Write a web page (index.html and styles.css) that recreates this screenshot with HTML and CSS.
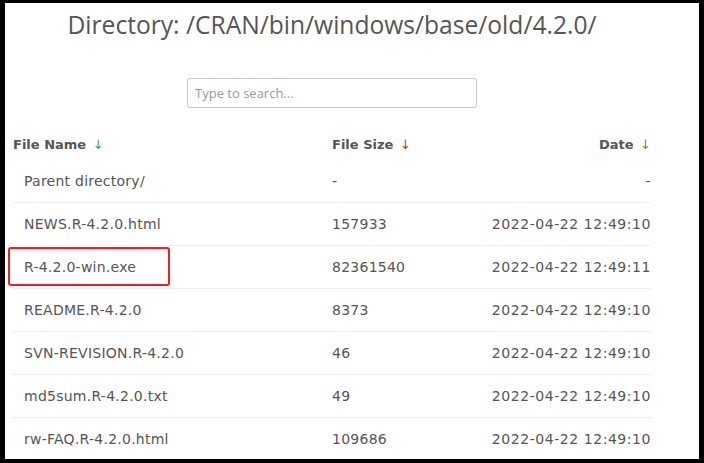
FILE: index.html
```html
<!DOCTYPE html>
<html>
<head>
<meta charset="utf-8">
<link rel="stylesheet" href="styles.css">
</head>
<body>
<div class="frame">
  <div class="content">
    <h1 class="title">Directory: /CRAN/bin/windows/base/old/4.2.0/</h1>
    <div class="search-wrap">
      <input class="search" type="text" placeholder="Type to search...">
    </div>
    <table class="listing">
      <thead>
        <tr>
          <th class="c-name">File Name <span class="arr arr-g">↓</span></th>
          <th class="c-size">File Size <span class="arr arr-r">↓</span></th>
          <th class="c-date">Date <span class="arr arr-o">↓</span></th>
        </tr>
      </thead>
      <tbody>
        <tr><td class="c-name">Parent directory/</td><td class="c-size">-</td><td class="c-date">-</td></tr>
        <tr><td class="c-name">NEWS.R-4.2.0.html</td><td class="c-size">157933</td><td class="c-date">2022-04-22 12:49:10</td></tr>
        <tr><td class="c-name"><span class="hl">R-4.2.0-win.exe</span></td><td class="c-size">82361540</td><td class="c-date">2022-04-22 12:49:11</td></tr>
        <tr><td class="c-name">README.R-4.2.0</td><td class="c-size">8373</td><td class="c-date">2022-04-22 12:49:10</td></tr>
        <tr><td class="c-name">SVN-REVISION.R-4.2.0</td><td class="c-size">46</td><td class="c-date">2022-04-22 12:49:10</td></tr>
        <tr><td class="c-name">md5sum.R-4.2.0.txt</td><td class="c-size">49</td><td class="c-date">2022-04-22 12:49:10</td></tr>
        <tr><td class="c-name">rw-FAQ.R-4.2.0.html</td><td class="c-size">109686</td><td class="c-date">2022-04-22 12:49:10</td></tr>
      </tbody>
    </table>
  </div>
</div>
</body>
</html>
```
FILE: styles.css
```css
html, body {
  margin: 0;
  padding: 0;
  background: #000;
}
.frame {
  box-sizing: border-box;
  width: 704px;
  height: 463px;
  border-style: solid;
  border-color: #000;
  border-width: 3px 5px 4px 5px;
  background: #fff;
  overflow: hidden;
}
.content {
  width: 638px;
  margin-left: 8px;
  display: flex;
  flex-direction: column;
}
.title {
  margin: 7px 0 0 0;
  text-align: center;
  font-family: "Open Sans", sans-serif;
  font-weight: 400;
  font-size: 24.6px;
  line-height: 30px;
  color: #555;
}
.search-wrap {
  display: flex;
  justify-content: center;
  margin-top: 38px;
}
.search {
  box-sizing: border-box;
  width: 290px;
  height: 30px;
  border: 1px solid #c8c8c8;
  border-radius: 3px;
  padding: 0 7px;
  font-family: "Open Sans", sans-serif;
  font-size: 13px;
  color: #555;
  outline: none;
}
.search::placeholder {
  color: #999;
}
.listing {
  margin-top: 19px;
  width: 638px;
  border-collapse: collapse;
  font-family: "DejaVu Sans", Verdana, sans-serif;
  font-size: 14px;
  color: #555;
}
.listing th {
  height: 31px;
  padding: 2px 0 0 0;
  font-size: 13px;
  font-weight: bold;
  color: #555;
  text-align: left;
}
.listing td {
  height: 42px;
  padding: 0;
  border-bottom: 1px solid #eceef3;
  letter-spacing: 0.25px;
}
.listing th.c-name {
  width: 319px;
}
.listing td.c-name {
  padding-left: 11px;
}
.listing .c-date {
  text-align: right;
}
.listing td.c-date {
  letter-spacing: 0.55px;
}
.arr {
  font-weight: normal;
  padding-left: 2px;
}
.arr-g { color: #4e9a62; }
.arr-r { color: #c8303c; }
.arr-o { color: #a0723a; }
.hl {
  position: relative;
}
.hl::after {
  content: "";
  position: absolute;
  left: -16px;
  top: -12px;
  width: 158px;
  height: 35px;
  border: 2px solid #f01e1e;
  border-radius: 3px;
}
```
